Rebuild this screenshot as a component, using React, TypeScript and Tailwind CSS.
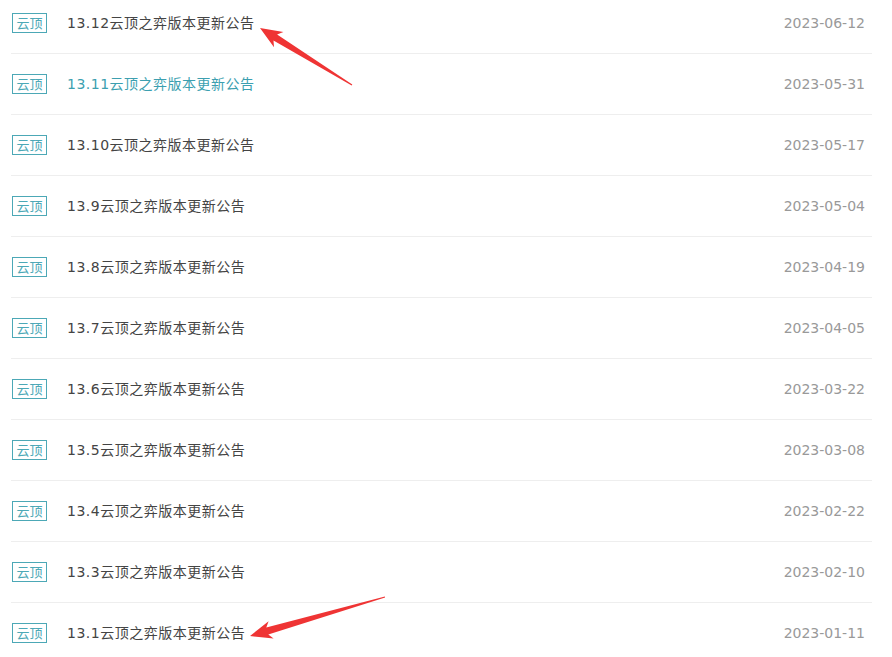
const items = [
  { title: '13.12云顶之弈版本更新公告', date: '2023-06-12' },
  { title: '13.11云顶之弈版本更新公告', date: '2023-05-31', active: true },
  { title: '13.10云顶之弈版本更新公告', date: '2023-05-17' },
  { title: '13.9云顶之弈版本更新公告', date: '2023-05-04' },
  { title: '13.8云顶之弈版本更新公告', date: '2023-04-19' },
  { title: '13.7云顶之弈版本更新公告', date: '2023-04-05' },
  { title: '13.6云顶之弈版本更新公告', date: '2023-03-22' },
  { title: '13.5云顶之弈版本更新公告', date: '2023-03-08' },
  { title: '13.4云顶之弈版本更新公告', date: '2023-02-22' },
  { title: '13.3云顶之弈版本更新公告', date: '2023-02-10' },
  { title: '13.1云顶之弈版本更新公告', date: '2023-01-11' },
];

export default function App() {
  return (
    <div className="relative w-[892px] h-[657px] overflow-hidden bg-white font-['DejaVu_Sans','Noto_Sans_CJK_SC',sans-serif]">
      <ul className="ml-[11px] w-[861px] mt-[-7px]">
        {items.map((it) => (
          <li key={it.title} className="flex items-center h-[61px] border-b border-[#eeeeee] pl-[1px] pr-[7px]">
            <span className="flex items-center justify-center w-[35px] h-[20px] border border-[#4ca8b6] text-[#4ca8b6] text-[13px] leading-none">
              云顶
            </span>
            <a
              href="#"
              className={`ml-[20px] text-[14px] tracking-[0.5px] ${it.active ? 'text-[#3c9fb0]' : 'text-[#444444]'}`}
            >
              {it.title}
            </a>
            <span className="ml-auto text-[14px] text-[#999999]">{it.date}</span>
          </li>
        ))}
      </ul>

      {/* annotation arrows */}
      <svg className="absolute inset-0 pointer-events-none" width="892" height="657" viewBox="0 0 892 657">
        <polygon
          fill="#ef3434"
          points="260,28 283.4,31.9 277.1,34.5 352.3,84.6 351.7,85.4 273.5,40.5 274,47.3"
        />
        <polygon
          fill="#ef3434"
          points="250,636 268.6,621.2 266.3,627.6 384.9,596.5 385.1,597.5 268.3,634.4 273.6,638.6"
        />
      </svg>
    </div>
  );
}
